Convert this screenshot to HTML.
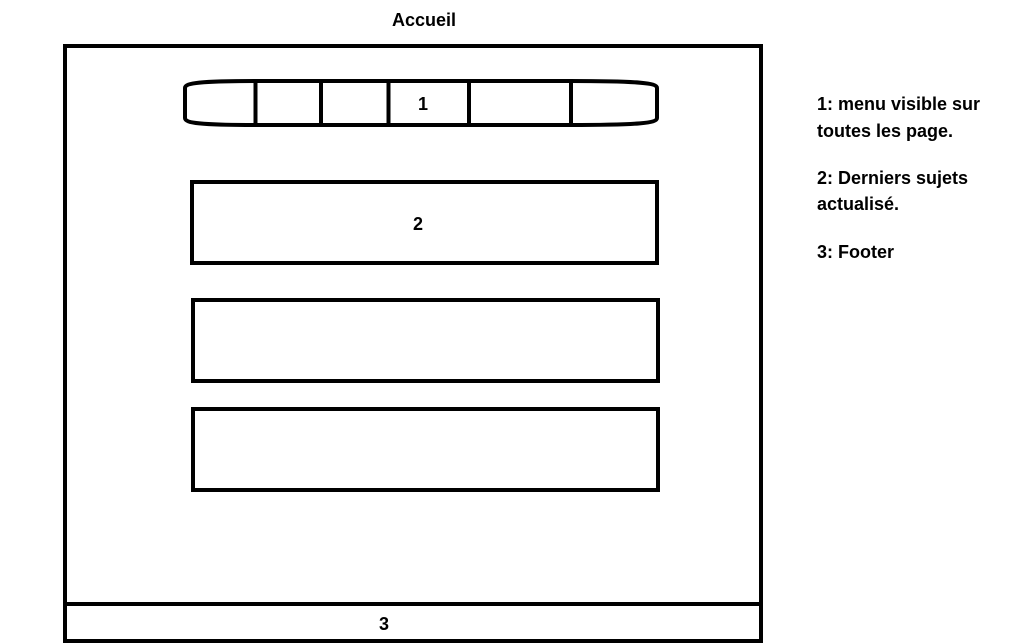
<!DOCTYPE html>
<html><head><meta charset="utf-8"><style>
html,body{margin:0;padding:0;background:#fff;width:1009px;height:643px;overflow:hidden}
svg{display:block}
text{font-family:"Liberation Sans",sans-serif;font-weight:bold;font-size:18px;fill:#000}
</style></head><body>
<svg width="1009" height="643" viewBox="0 0 1009 643">
<text x="392" y="26">Accueil</text>
<rect x="65" y="46" width="696" height="595" fill="none" stroke="#000" stroke-width="4"/>
<line x1="65" y1="604" x2="761" y2="604" stroke="#000" stroke-width="4"/>
<text x="379" y="630">3</text>
<path d="M255,81 L570,81 C640,81 657,83 657,88 L657,118 C657,123 640,125 570,125 L255,125 C200,125 185,123 185,118 L185,88 C185,83 200,81 255,81 Z" fill="none" stroke="#000" stroke-width="4"/>
<g stroke="#000" stroke-width="4">
<line x1="255.5" y1="81" x2="255.5" y2="125"/>
<line x1="321" y1="81" x2="321" y2="125"/>
<line x1="388.5" y1="81" x2="388.5" y2="125"/>
<line x1="469" y1="81" x2="469" y2="125"/>
<line x1="571" y1="81" x2="571" y2="125"/>
</g>
<text x="418" y="110">1</text>
<rect x="192" y="182" width="465" height="81" fill="none" stroke="#000" stroke-width="4"/>
<text x="413" y="230">2</text>
<rect x="193" y="300" width="465" height="81" fill="none" stroke="#000" stroke-width="4"/>
<rect x="193" y="409" width="465" height="81" fill="none" stroke="#000" stroke-width="4"/>
<text x="817" y="110">1: menu visible sur</text>
<text x="817" y="137">toutes les page.</text>
<text x="817" y="184">2: Derniers sujets</text>
<text x="817" y="210">actualisé.</text>
<text x="817" y="258">3: Footer</text>
</svg>
</body></html>
